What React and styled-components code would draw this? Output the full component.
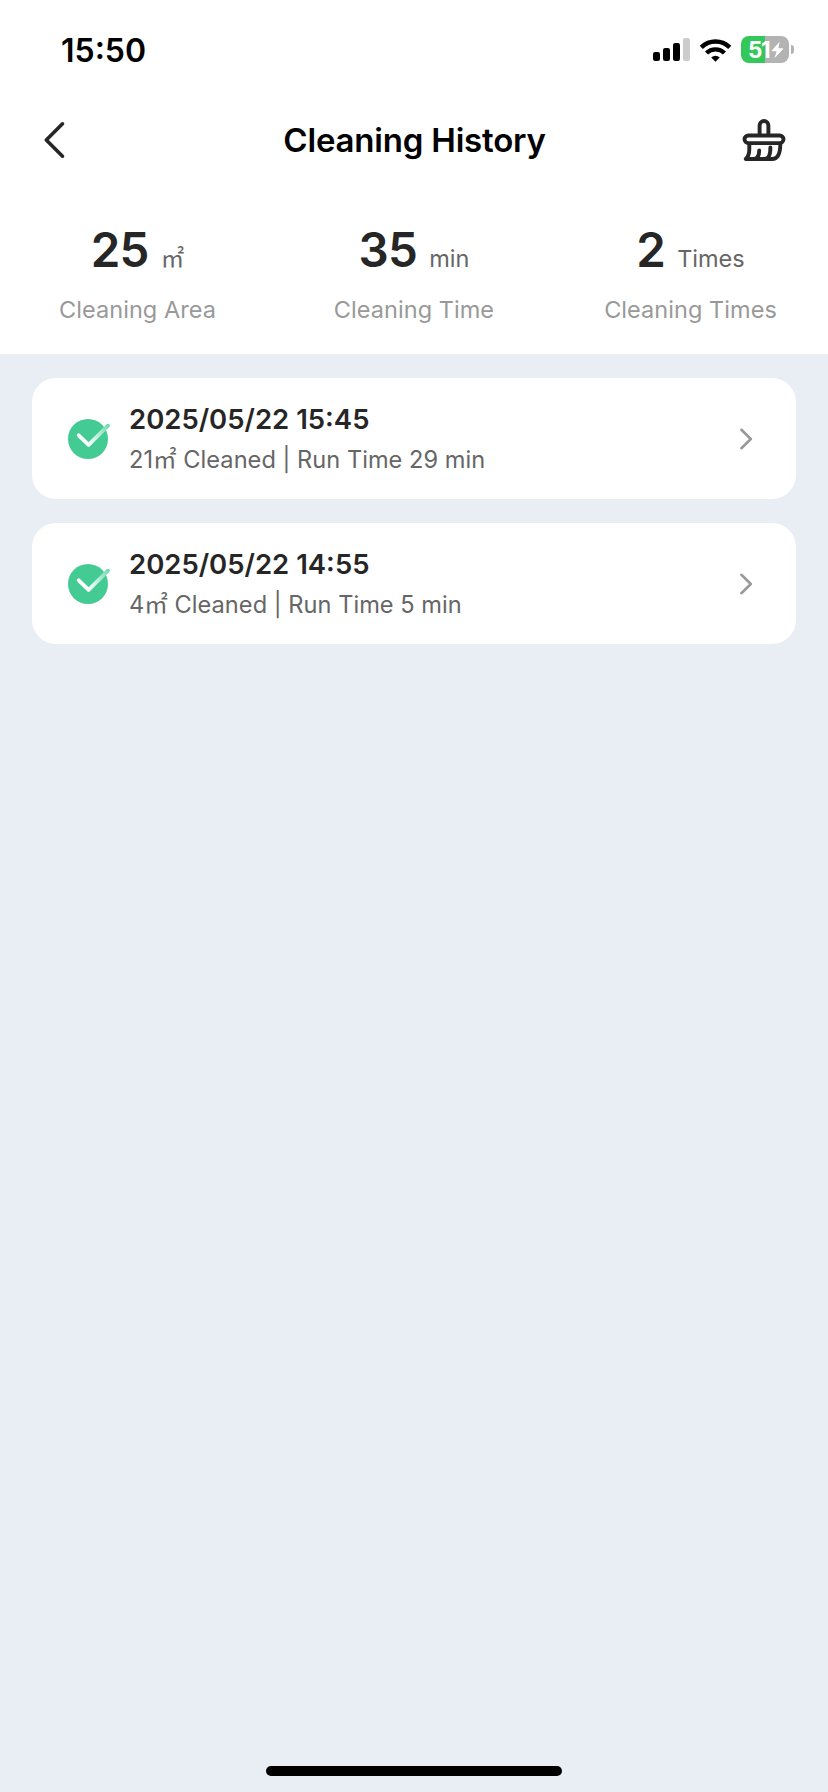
import React from "react";
import styled, { createGlobalStyle } from "styled-components";

const records = [
  { id: 1, date: "2025/05/22 15:45", area: 21, time: 29 },
  { id: 2, date: "2025/05/22 14:55", area: 4, time: 5 },
];

const stats = [
  { value: 25, unit: "㎡", label: "Cleaning Area", width: "275px" },
  { value: 35, unit: "min", label: "Cleaning Time", width: "278px" },
  { value: 2, unit: "Times", label: "Cleaning Times", width: "275px" },
];

const SignalIcon = () => (
  <svg width="37" height="23" viewBox="0 0 37 23">
    <rect x="0" y="14" width="7" height="9" rx="2.2" />
    <rect x="10" y="10" width="7" height="13" rx="2.2" />
    <rect x="20" y="5" width="7" height="18" rx="2.2" />
    <rect x="30" y="0" width="7" height="23" rx="2.2" fill="#cccccc" />
  </svg>
);

const WifiIcon = () => (
  <svg width="31" height="24" viewBox="0.5 0 31 24">
    <g fill="none" stroke="#000000" strokeWidth="4.4">
      <path d="M1.8 9.3A20.4 20.4 0 0 1 30.2 9.3" />
      <path d="M7 15A12.9 12.9 0 0 1 25 15" />
    </g>
    <path d="M16 23.8l-4.3-4.3a6.2 6.2 0 0 1 8.6 0z" />
  </svg>
);

const BoltIcon = () => (
  <svg width="13" height="18" viewBox="0 0 13 18">
    <path
      d="M8.6 0.8L0.8 9.6Q0.4 10.3 1.2 10.3H5.6L3.5 17.2L12.1 7.9Q12.5 7.2 11.7 7.2H7.4Z"
      fill="#ffffff"
    />
  </svg>
);

const BackIcon = () => (
  <svg width="24" height="38" viewBox="0 0 24 38">
    <path
      d="M19.5 2.8L3.3 19L19.5 35.2"
      fill="none"
      stroke="#262626"
      strokeWidth="3.6"
      strokeLinecap="round"
      strokeLinejoin="round"
    />
  </svg>
);

const BroomIcon = () => (
  <svg width="44" height="44" viewBox="0 0 44 44">
    <g
      fill="none"
      stroke="#262626"
      strokeWidth="3.9"
      strokeLinecap="round"
      strokeLinejoin="round"
    >
      <path d="M17.6 17V7.4a4.4 4.4 0 0 1 8.8 0V17" />
      <rect x="2.5" y="17.5" width="39" height="7.6" rx="3.8" />
      <path d="M7.3 26V31.5C7.3 36 6.2 38.8 3.7 41H11.5C15 41 17.2 38 17.2 32.5" />
      <path d="M11.5 41H22.5C26.5 41 28.4 37 28.4 29.5" />
      <path d="M22.5 41H30C35.6 41 38.3 36.5 38.3 26" />
    </g>
  </svg>
);

const CheckIcon = () => (
  <svg width="44" height="42" viewBox="0 0 44 42">
    <defs>
      <linearGradient
        id="checkStroke"
        gradientUnits="userSpaceOnUse"
        x1="21"
        y1="27"
        x2="41"
        y2="7"
      >
        <stop offset="0" stopColor="#ffffff" />
        <stop offset="0.12" stopColor="#effbf6" />
        <stop offset="1" stopColor="#6fdaaf" />
      </linearGradient>
    </defs>
    <circle cx="20" cy="21" r="20" fill="#44cb94" />
    <path
      d="M10.7 17.3L20.6 26.9L40 7.7"
      fill="none"
      stroke="url(#checkStroke)"
      strokeWidth="3.8"
      strokeLinecap="round"
      strokeLinejoin="round"
    />
  </svg>
);

const ArrowIcon = () => (
  <svg width="14" height="22" viewBox="0 0 14 22">
    <path
      d="M2.4 1.8L11.8 11L2.4 20.2"
      fill="none"
      stroke="#999999"
      strokeWidth="2.6"
      strokeLinecap="round"
      strokeLinejoin="round"
    />
  </svg>
);

const App = () => {
  return (
    <Page>
      <GlobalStyle />
      <Top>
        <StatusBar>
          <Clock>15:50</Clock>
          <StatusIcons>
            <SignalIcon />
            <WifiIcon />
            <BatteryWrapper>
              <Battery>
                51
                <BoltIcon />
              </Battery>
              <BatteryTip />
            </BatteryWrapper>
          </StatusIcons>
        </StatusBar>
        <Header>
          <BackIcon />
          <Title>Cleaning History</Title>
          <BroomIcon />
        </Header>
        <Stats>
          {stats.map((stat) => (
            <Stat key={stat.label} $width={stat.width}>
              <StatValue>
                {stat.value}
                <Unit>{stat.unit}</Unit>
              </StatValue>
              <StatLabel>{stat.label}</StatLabel>
            </Stat>
          ))}
        </Stats>
      </Top>
      <List>
        {records.map((record) => (
          <Card key={record.id}>
            <CheckIcon />
            <CardText>
              <CardDate>{record.date}</CardDate>
              <CardInfo>
                {record.area}㎡ Cleaned | Run Time {record.time} min
              </CardInfo>
            </CardText>
            <ArrowIcon />
          </Card>
        ))}
      </List>
      <HomeIndicator />
    </Page>
  );
};

const GlobalStyle = createGlobalStyle`
  * {
    box-sizing: border-box;
  }

  body {
    margin: 0;
    font-family: Inter, "Noto Sans CJK SC", sans-serif;
  }

  svg {
    display: block;
    flex-shrink: 0;
  }
`;

const Page = styled.div`
  width: 828px;
  height: 1792px;
  display: flex;
  flex-direction: column;
  align-items: center;
  background-color: #e9edf4;
`;

const Top = styled.div`
  width: 100%;
  height: 354px;
  background-color: #ffffff;
`;

const StatusBar = styled.div`
  height: 99px;
  padding: 0 34px 0 61px;
  display: flex;
  justify-content: space-between;
  align-items: center;
`;

const Clock = styled.div`
  padding-top: 2px;
  font-size: 32px;
  font-weight: 600;
  line-height: 40px;
  color: #000000;
`;

const StatusIcons = styled.div`
  display: flex;
  align-items: center;
  gap: 10px;
`;

const BatteryWrapper = styled.div`
  display: flex;
  align-items: center;
  gap: 2px;
`;

const Battery = styled.div`
  width: 48px;
  height: 27px;
  padding-left: 7px;
  display: flex;
  align-items: center;
  gap: 2px;
  border-radius: 8px;
  background: linear-gradient(to right, #34c759 50%, #b3b3b3 50%);
  color: #ffffff;
  font-size: 22.5px;
  font-weight: 700;
  line-height: 28px;
  letter-spacing: -1.5px;
`;

const BatteryTip = styled.div`
  width: 3px;
  height: 9px;
  border-radius: 0 4px 4px 0;
  background-color: #b3b3b3;
`;

const Header = styled.div`
  height: 82px;
  padding: 0 42px 0 43px;
  display: flex;
  justify-content: space-between;
  align-items: center;
`;

const Title = styled.h1`
  margin: 0;
  padding-left: 20px;
  color: #000000;
  font-size: 33px;
  font-weight: 600;
  line-height: 44px;
  letter-spacing: -0.2px;
`;

const Stats = styled.div`
  padding-top: 39px;
  display: flex;
`;

const Stat = styled.div`
  width: ${({ $width }) => $width};
  display: flex;
  flex-direction: column;
  align-items: center;
`;

const StatValue = styled.div`
  height: 60px;
  display: flex;
  align-items: baseline;
  gap: 12px;
  color: #262626;
  font-size: 47.5px;
  font-weight: 600;
  line-height: 60px;
  letter-spacing: -0.7px;
`;

const Unit = styled.span`
  color: #666666;
  font-size: 23.5px;
  font-weight: 400;
  line-height: 30px;
  letter-spacing: 0;
`;

const StatLabel = styled.div`
  margin-top: 14px;
  color: #999999;
  font-size: 23.5px;
  line-height: 32px;
  letter-spacing: 0.05px;
`;

const List = styled.div`
  width: 764px;
  padding-top: 24px;
  display: flex;
  flex-direction: column;
  gap: 24px;
  flex: 1;
`;

const Card = styled.div`
  height: 121px;
  padding: 0 43px 0 36px;
  display: flex;
  align-items: center;
  border-radius: 24px;
  background-color: #ffffff;
`;

const CardText = styled.div`
  flex: 1;
  padding: 2px 0 0 17px;
`;

const CardDate = styled.div`
  color: #262626;
  font-size: 27.5px;
  font-weight: 600;
  line-height: 40px;
`;

const CardInfo = styled.div`
  color: #666666;
  font-size: 23.6px;
  line-height: 41px;
  letter-spacing: 0.03px;
`;

const HomeIndicator = styled.div`
  width: 296px;
  height: 10px;
  margin-bottom: 16px;
  border-radius: 5px;
  background-color: #000000;
`;

export default App;
